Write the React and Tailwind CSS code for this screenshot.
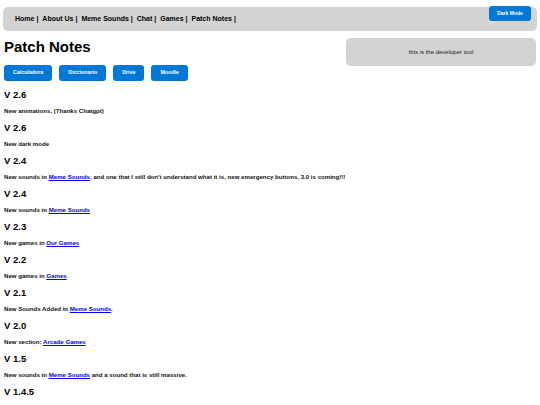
import React from "react";

const NAV = ["Home", "About Us", "Meme Sounds", "Chat", "Games", "Patch Notes"];
const TOOLS = ["Calculadora", "Diccionario", "Drive", "Moodle"];

const Link = ({ children }) => (
  <a href="#" className="text-[#0000ee] underline">{children}</a>
);

const NOTES = [
  { v: "V 2.6", text: <>New animations, (Thanks Chatgpt)</> },
  { v: "V 2.6", text: <>New dark mode</> },
  {
    v: "V 2.4",
    text: (
      <>
        New sounds in <Link>Meme Sounds</Link>, and one that I still don't understand what it is, new emergency buttons, 3.0 is coming!!!
      </>
    ),
  },
  { v: "V 2.4", text: <>New sounds in <Link>Meme Sounds</Link></> },
  { v: "V 2.3", text: <>New games in <Link>Our Games</Link></> },
  { v: "V 2.2", text: <>New games in <Link>Games</Link></> },
  { v: "V 2.1", text: <>New Sounds Added in <Link>Meme Sounds</Link>.</> },
  { v: "V 2.0", text: <>New section: <Link>Arcade Games</Link></> },
  { v: "V 1.5", text: <>New sounds in <Link>Meme Sounds</Link> and a sound that is still massive.</> },
  { v: "V 1.4.5", text: null },
];

export default function App() {
  return (
    <div className="relative min-h-[405px] bg-white text-black font-['Liberation_Sans',Arial,sans-serif]">
      {/* top navigation */}
      <nav className="mx-[3px] pt-[7px]">
        <div className="flex h-[24px] items-center rounded-[5px] bg-[#d3d3d3] pl-[12px] text-[7px] font-bold">
          {NAV.map((item) => (
            <span key={item} className="mr-[4px]">
              <a href="#" className="text-black">{item}</a> |
            </span>
          ))}
        </div>
      </nav>

      <button className="absolute top-[6px] right-[9px] h-[15px] w-[42px] rounded-[3px] bg-[#0078d7] text-[5px] font-bold text-white">
        Dark Mode
      </button>

      <div className="flex justify-between px-[4px] pt-[7px]">
        <div>
          <h1 className="text-[15px] font-bold leading-[18px]">Patch Notes</h1>
          <div className="mt-[9px] flex gap-[7px]">
            {TOOLS.map((t) => (
              <button
                key={t}
                className="h-[16px] rounded-[3px] bg-[#0078d7] px-[9px] text-[5.3px] font-bold text-white"
              >
                {t}
              </button>
            ))}
          </div>
        </div>
        <div className="flex h-[28px] w-[190px] items-center justify-center rounded-[5px] bg-[#d3d3d3] text-[6px] text-[#222]">
          this is the developer tool
        </div>
      </div>

      <div className="px-[4px] pt-[8px]">
        {NOTES.map((n, i) => (
          <div key={i}>
            <h3 className="mb-[6px] text-[9.5px] font-bold leading-[12px]">{n.v}</h3>
            {n.text && (
              <p className="mb-[7px] text-[6.1px] font-bold leading-[8px] text-[#111]">{n.text}</p>
            )}
          </div>
        ))}
      </div>
    </div>
  );
}
